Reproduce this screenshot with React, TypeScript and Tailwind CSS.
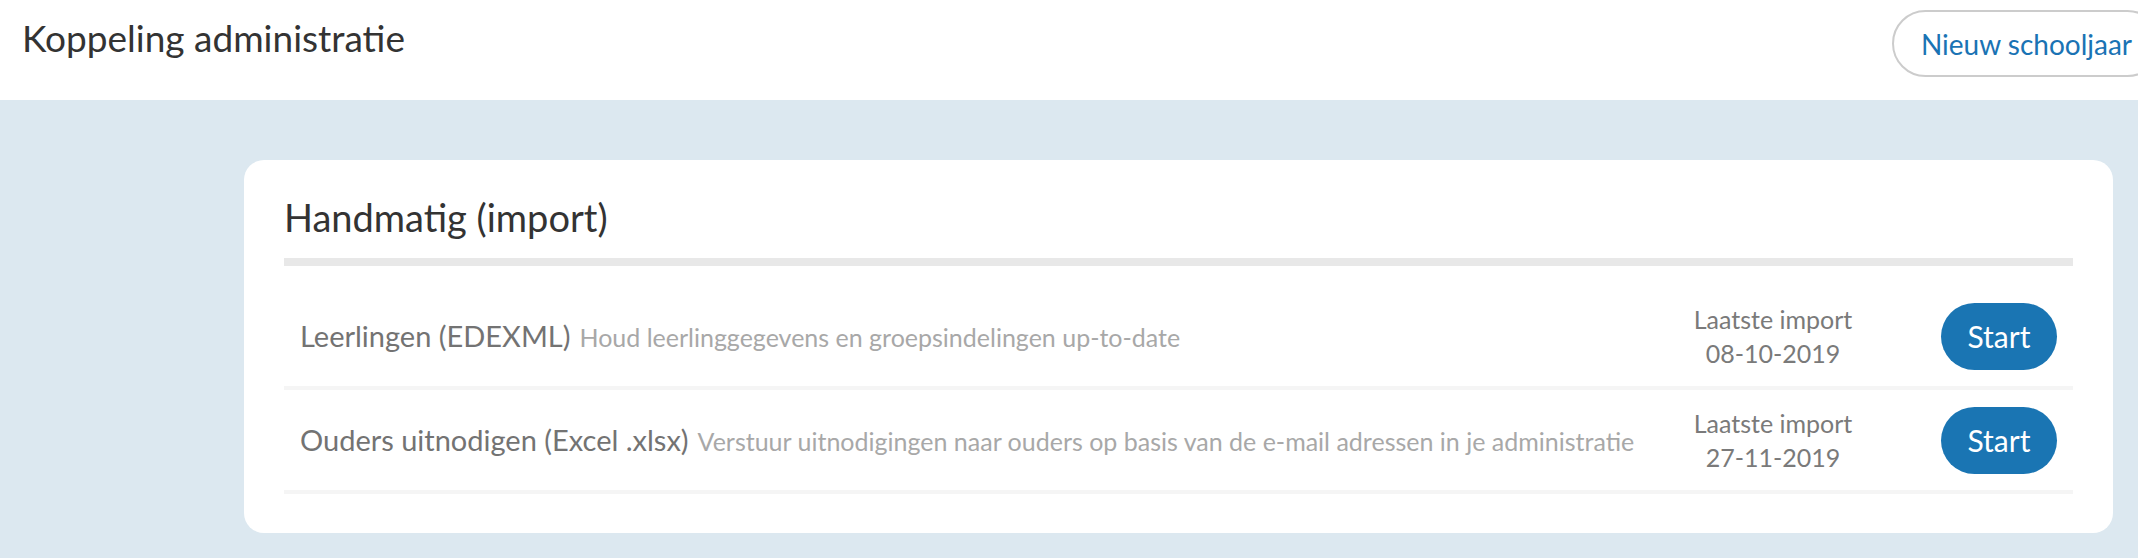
import React from 'react'

interface ImportRowProps {
  title: string
  description: string
  lastImport: string
}

const rows: ImportRowProps[] = [
  {
    title: 'Leerlingen (EDEXML)',
    description: 'Houd leerlinggegevens en groepsindelingen up-to-date',
    lastImport: '08-10-2019'
  },
  {
    title: 'Ouders uitnodigen (Excel .xlsx)',
    description: 'Verstuur uitnodigingen naar ouders op basis van de e-mail adressen in je administratie',
    lastImport: '27-11-2019'
  }
]

function ImportRow({ title, description, lastImport }: ImportRowProps) {
  return (
    <div className="flex items-center h-[104px] border-b-4 border-[#f5f5f5] pl-4 pr-4">
      <div className="flex-1 min-w-0 whitespace-nowrap">
        <span className="text-[29px] text-[#737373]">{title}</span>
        <span className="ml-[9px] text-[25px] text-[#a8a8a8]">{description}</span>
      </div>

      <div className="w-[180px] mr-[78px] text-center text-[25px] leading-[34px] text-[#7a7a7a]">
        <div>Laatste import</div>
        <div>{lastImport}</div>
      </div>

      <button className="h-[67px] w-[116px] rounded-full bg-[#1a75b3] text-white text-[30px] leading-none">
        Start
      </button>
    </div>
  )
}

export default function App() {
  return (
    <div
      className="min-h-[558px] bg-[#dce8f0] overflow-hidden"
      style={{ fontFamily: '"Lato", "Open Sans", sans-serif' }}
    >
      {/* Header */}
      <header className="h-[100px] bg-white flex items-start justify-between">
        <h1 className="pl-[22px] pt-[16px] text-[37px] leading-[44px] text-[#333333] font-normal">
          Koppeling administratie
        </h1>
        <button className="mt-[10px] -mr-[23px] h-[67px] px-[27px] rounded-full border-2 border-[#cccccc] bg-white text-[28px] text-[#1a73b4] whitespace-nowrap shrink-0">
          Nieuw schooljaar
        </button>
      </header>

      {/* Card */}
      <main className="pt-[60px] pb-[25px]">
        <section className="ml-[244px] w-[1869px] bg-white rounded-[20px] px-10 pt-[35px] pb-[39px]">
          <h2 className="text-[38px] leading-[44px] text-[#333333] font-normal mb-[19px]">
            Handmatig (import)
          </h2>
          <div className="h-2 bg-[#e8e8e8] mb-5" />

          {rows.map(row => (
            <ImportRow key={row.title} {...row} />
          ))}
        </section>
      </main>
    </div>
  )
}
